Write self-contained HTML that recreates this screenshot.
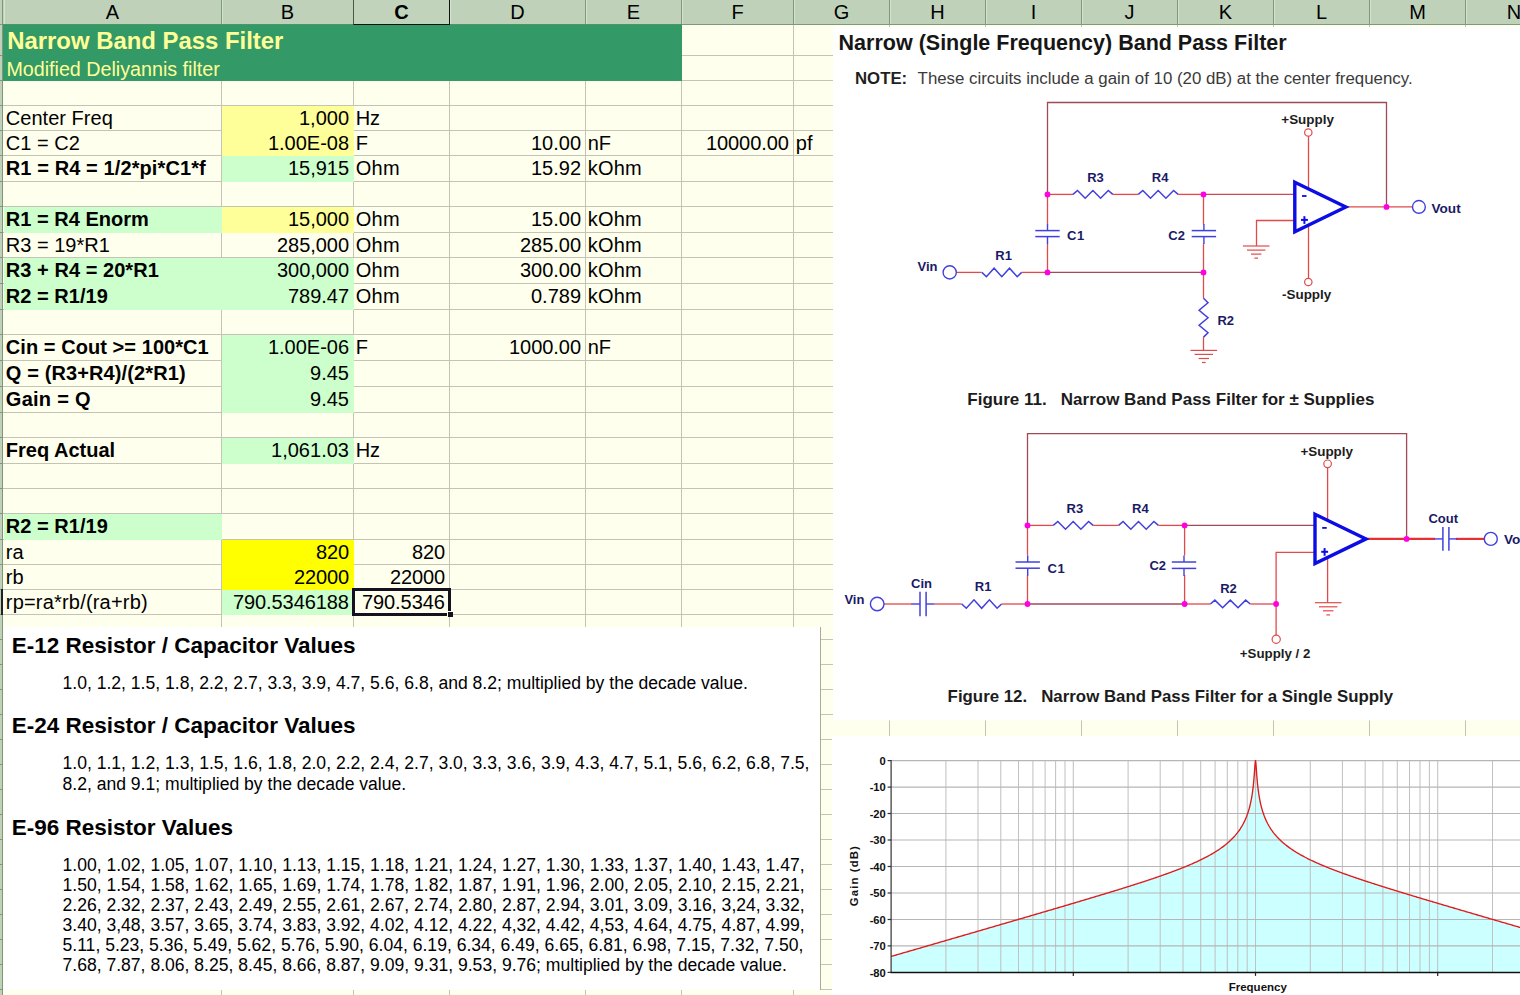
<!DOCTYPE html><html><head><meta charset="utf-8"><title>Narrow Band Pass Filter</title>
<style>
html,body{margin:0;padding:0}html{width:1520px;height:995px;overflow:hidden}
body{width:1520px;height:995px;position:relative;overflow:hidden;background:#FFFFEE;font-family:"Liberation Sans",sans-serif;color:#000}
div,span{position:absolute;box-sizing:border-box}
.t{font-size:20px;line-height:25px;white-space:pre}
.b{font-weight:bold}
.vl{width:1px;background:#C3C3B6}
.hl{height:1px;background:#C3C3B6}
.h{top:0;height:25px;font-size:20px;line-height:24px;text-align:center;background:#BFD2B9;border-right:1px solid #82977F;border-bottom:1px solid #7C9A7A;box-shadow:inset 1px 0 0 #D0E6CE}
.fy{background:#FFFF99}.fg{background:#CCFFCC}.fY{background:#FFFF00}
svg{position:absolute;left:0;top:0}
</style></head><body>
<div class="hl" style="left:3px;top:55px;width:831px"></div>
<div class="hl" style="left:3px;top:80px;width:831px"></div>
<div class="hl" style="left:3px;top:105px;width:831px"></div>
<div class="hl" style="left:3px;top:130px;width:831px"></div>
<div class="hl" style="left:3px;top:155px;width:831px"></div>
<div class="hl" style="left:3px;top:181px;width:831px"></div>
<div class="hl" style="left:3px;top:206px;width:831px"></div>
<div class="hl" style="left:3px;top:232px;width:831px"></div>
<div class="hl" style="left:3px;top:257px;width:831px"></div>
<div class="hl" style="left:3px;top:283px;width:831px"></div>
<div class="hl" style="left:3px;top:309px;width:831px"></div>
<div class="hl" style="left:3px;top:334px;width:831px"></div>
<div class="hl" style="left:3px;top:360px;width:831px"></div>
<div class="hl" style="left:3px;top:386px;width:831px"></div>
<div class="hl" style="left:3px;top:412px;width:831px"></div>
<div class="hl" style="left:3px;top:437px;width:831px"></div>
<div class="hl" style="left:3px;top:463px;width:831px"></div>
<div class="hl" style="left:3px;top:488px;width:831px"></div>
<div class="hl" style="left:3px;top:513px;width:831px"></div>
<div class="hl" style="left:3px;top:539px;width:831px"></div>
<div class="hl" style="left:3px;top:564px;width:831px"></div>
<div class="hl" style="left:3px;top:589px;width:831px"></div>
<div class="hl" style="left:3px;top:614px;width:831px"></div>
<div class="vl" style="left:221px;top:24px;height:603px"></div>
<div class="vl" style="left:353px;top:24px;height:603px"></div>
<div class="vl" style="left:449px;top:24px;height:603px"></div>
<div class="vl" style="left:585px;top:24px;height:603px"></div>
<div class="vl" style="left:681px;top:24px;height:603px"></div>
<div class="vl" style="left:793px;top:24px;height:603px"></div>
<div class="hl" style="left:820px;top:639px;width:14px"></div>
<div class="hl" style="left:820px;top:664px;width:14px"></div>
<div class="hl" style="left:820px;top:689px;width:14px"></div>
<div class="hl" style="left:820px;top:714px;width:14px"></div>
<div class="hl" style="left:820px;top:739px;width:14px"></div>
<div class="hl" style="left:820px;top:764px;width:14px"></div>
<div class="hl" style="left:820px;top:789px;width:14px"></div>
<div class="hl" style="left:820px;top:814px;width:14px"></div>
<div class="hl" style="left:820px;top:839px;width:14px"></div>
<div class="hl" style="left:820px;top:864px;width:14px"></div>
<div class="hl" style="left:820px;top:889px;width:14px"></div>
<div class="hl" style="left:820px;top:914px;width:14px"></div>
<div class="hl" style="left:820px;top:939px;width:14px"></div>
<div class="hl" style="left:820px;top:964px;width:14px"></div>
<div class="hl" style="left:820px;top:989px;width:14px"></div>
<div class="vl" style="left:221px;top:990px;height:5px"></div>
<div class="vl" style="left:353px;top:990px;height:5px"></div>
<div class="vl" style="left:449px;top:990px;height:5px"></div>
<div class="vl" style="left:585px;top:990px;height:5px"></div>
<div class="vl" style="left:681px;top:990px;height:5px"></div>
<div class="vl" style="left:793px;top:990px;height:5px"></div>
<div class="vl" style="left:889px;top:25px;height:3px"></div>
<div class="vl" style="left:985px;top:25px;height:3px"></div>
<div class="vl" style="left:1081px;top:25px;height:3px"></div>
<div class="vl" style="left:1177px;top:25px;height:3px"></div>
<div class="vl" style="left:1273px;top:25px;height:3px"></div>
<div class="vl" style="left:1369px;top:25px;height:3px"></div>
<div class="vl" style="left:1465px;top:25px;height:3px"></div>
<div class="vl" style="left:889px;top:720px;height:16px"></div>
<div class="vl" style="left:985px;top:720px;height:16px"></div>
<div class="vl" style="left:1081px;top:720px;height:16px"></div>
<div class="vl" style="left:1177px;top:720px;height:16px"></div>
<div class="vl" style="left:1273px;top:720px;height:16px"></div>
<div class="vl" style="left:1369px;top:720px;height:16px"></div>
<div class="vl" style="left:1465px;top:720px;height:16px"></div>
<div style="left:3px;top:25px;width:679px;height:56px;background:#339966"></div>
<div class="fy" style="left:222px;top:106px;width:132px;height:50px"></div>
<div class="fg" style="left:222px;top:156px;width:132px;height:26px"></div>
<div class="fg" style="left:4px;top:207px;width:218px;height:26px"></div>
<div class="fy" style="left:222px;top:207px;width:132px;height:26px"></div>
<div class="fg" style="left:4px;top:258px;width:350px;height:52px"></div>
<div class="fg" style="left:222px;top:335px;width:132px;height:78px"></div>
<div class="fg" style="left:222px;top:438px;width:132px;height:26px"></div>
<div class="fg" style="left:4px;top:514px;width:218px;height:26px"></div>
<div class="fY" style="left:222px;top:540px;width:132px;height:50px"></div>
<div class="fg" style="left:222px;top:590px;width:132px;height:25px"></div>
<span class="b" style="left:7.2px;top:26.7px;font-size:23.9px;line-height:28px;color:#FFFF99;white-space:pre">Narrow Band Pass Filter</span>
<span style="left:6.4px;top:56.5px;font-size:19.7px;line-height:24px;color:#FFFF99;white-space:pre">Modified Deliyannis filter</span>
<span class="t" style="left:5.8px;top:106.3px;letter-spacing:0.026px;">Center Freq</span>
<span class="t" style="right:1171.0px;top:106.3px;letter-spacing:-0.010px">1,000</span>
<span class="t" style="left:355.8px;top:106.3px;letter-spacing:-0.222px;">Hz</span>
<span class="t" style="left:5.8px;top:131.3px;letter-spacing:0.011px;">C1 = C2</span>
<span class="t" style="right:1171.0px;top:131.3px;letter-spacing:-0.021px">1.00E-08</span>
<span class="t" style="left:355.8px;top:131.3px;letter-spacing:-0.217px;">F</span>
<span class="t" style="right:939.0px;top:131.3px;letter-spacing:-0.010px">10.00</span>
<span class="t" style="left:587.8px;top:131.3px;letter-spacing:-0.170px;">nF</span>
<span class="t b" style="left:5.8px;top:156.3px;letter-spacing:0.101px;">R1 = R4 = 1/2*pi*C1*f</span>
<span class="t" style="right:1171.0px;top:156.3px;letter-spacing:-0.029px">15,915</span>
<span class="t" style="left:355.8px;top:156.3px;letter-spacing:0.220px;">Ohm</span>
<span class="t" style="right:939.0px;top:156.3px;letter-spacing:-0.010px">15.92</span>
<span class="t" style="left:587.8px;top:156.3px;letter-spacing:0.165px;">kOhm</span>
<span class="t b" style="left:5.8px;top:207.3px;letter-spacing:0.014px;">R1 = R4 Enorm</span>
<span class="t" style="right:1171.0px;top:207.3px;letter-spacing:-0.029px">15,000</span>
<span class="t" style="left:355.8px;top:207.3px;letter-spacing:0.220px;">Ohm</span>
<span class="t" style="right:939.0px;top:207.3px;letter-spacing:-0.010px">15.00</span>
<span class="t" style="left:587.8px;top:207.3px;letter-spacing:0.165px;">kOhm</span>
<span class="t" style="left:5.8px;top:233.3px;letter-spacing:0.004px;">R3 = 19*R1</span>
<span class="t" style="right:1171.0px;top:233.3px;letter-spacing:-0.042px">285,000</span>
<span class="t" style="left:355.8px;top:233.3px;letter-spacing:0.220px;">Ohm</span>
<span class="t" style="right:939.0px;top:233.3px;letter-spacing:-0.029px">285.00</span>
<span class="t" style="left:587.8px;top:233.3px;letter-spacing:0.165px;">kOhm</span>
<span class="t b" style="left:5.8px;top:258.3px;letter-spacing:0.046px;">R3 + R4 = 20*R1</span>
<span class="t" style="right:1171.0px;top:258.3px;letter-spacing:-0.042px">300,000</span>
<span class="t" style="left:355.8px;top:258.3px;letter-spacing:0.220px;">Ohm</span>
<span class="t" style="right:939.0px;top:258.3px;letter-spacing:-0.029px">300.00</span>
<span class="t" style="left:587.8px;top:258.3px;letter-spacing:0.165px;">kOhm</span>
<span class="t b" style="left:5.8px;top:284.3px;letter-spacing:0.027px;">R2 = R1/19</span>
<span class="t" style="right:1171.0px;top:284.3px;letter-spacing:-0.029px">789.47</span>
<span class="t" style="left:355.8px;top:284.3px;letter-spacing:0.220px;">Ohm</span>
<span class="t" style="right:939.0px;top:284.3px;letter-spacing:-0.010px">0.789</span>
<span class="t" style="left:587.8px;top:284.3px;letter-spacing:0.165px;">kOhm</span>
<span class="t b" style="left:5.8px;top:335.3px;letter-spacing:0.063px;">Cin = Cout &gt;= 100*C1</span>
<span class="t" style="right:1171.0px;top:335.3px;letter-spacing:-0.021px">1.00E-06</span>
<span class="t" style="left:355.8px;top:335.3px;letter-spacing:-0.217px;">F</span>
<span class="t" style="right:939.0px;top:335.3px;letter-spacing:-0.042px">1000.00</span>
<span class="t" style="left:587.8px;top:335.3px;letter-spacing:-0.170px;">nF</span>
<span class="t b" style="left:5.8px;top:361.3px;letter-spacing:0.120px;">Q = (R3+R4)/(2*R1)</span>
<span class="t" style="right:1171.0px;top:361.3px;letter-spacing:0.019px">9.45</span>
<span class="t b" style="left:5.8px;top:387.3px;letter-spacing:0.275px;">Gain = Q</span>
<span class="t" style="right:1171.0px;top:387.3px;letter-spacing:0.019px">9.45</span>
<span class="t b" style="left:5.8px;top:438.3px;letter-spacing:-0.002px;">Freq Actual</span>
<span class="t" style="right:1171.0px;top:438.3px;letter-spacing:0.019px">1,061.03</span>
<span class="t" style="left:355.8px;top:438.3px;letter-spacing:-0.222px;">Hz</span>
<span class="t b" style="left:5.8px;top:514.3px;letter-spacing:0.027px;">R2 = R1/19</span>
<span class="t" style="left:5.8px;top:540.3px;letter-spacing:0.108px;">ra</span>
<span class="t" style="right:1171.1px;top:540.3px;letter-spacing:-0.123px">820</span>
<span class="t" style="left:5.8px;top:565.3px;letter-spacing:0.108px;">rb</span>
<span class="t" style="right:1171.1px;top:565.3px;letter-spacing:-0.123px">22000</span>
<span class="t" style="left:5.8px;top:590.3px;letter-spacing:0.192px;">rp=ra*rb/(ra+rb)</span>
<span class="t" style="right:1171.1px;top:590.3px;letter-spacing:-0.072px">790.5346188</span>
<span class="t" style="right:731.1px;top:131.3px;letter-spacing:-0.052px">10000.00</span>
<span class="t" style="left:795.8px;top:131.3px;letter-spacing:0.160px;">pf</span>
<span class="t" style="right:1075.1px;top:540.3px;letter-spacing:-0.123px">820</span>
<span class="t" style="right:1075.1px;top:565.3px;letter-spacing:-0.123px">22000</span>
<span class="t" style="right:1075.1px;top:590.3px;letter-spacing:-0.052px">790.5346</span>
<div style="left:352px;top:588px;width:99px;height:28px;border:3px solid #15121F"></div>
<div style="left:447px;top:611px;width:6px;height:6px;background:#15121F;border:1px solid #FFFFEE;border-right:0;border-bottom:0"></div>
<div style="left:4px;top:627px;width:817px;height:363px;background:#fff;border-right:1px solid #ABAB98"></div>
<span style="left:11.7px;top:632.30px;font-size:22.50px;line-height:27px;white-space:pre;color:#000;font-weight:bold;">E-12 Resistor / Capacitor Values</span>
<span style="left:62.5px;top:671.51px;font-size:17.57px;line-height:22px;white-space:pre;color:#000;">1.0, 1.2, 1.5, 1.8, 2.2, 2.7, 3.3, 3.9, 4.7, 5.6, 6.8, and 8.2; multiplied by the decade value.</span>
<span style="left:11.7px;top:712.30px;font-size:22.50px;line-height:27px;white-space:pre;color:#000;font-weight:bold;">E-24 Resistor / Capacitor Values</span>
<span style="left:62.5px;top:752.41px;font-size:17.57px;line-height:22px;white-space:pre;color:#000;">1.0, 1.1, 1.2, 1.3, 1.5, 1.6, 1.8, 2.0, 2.2, 2.4, 2.7, 3.0, 3.3, 3.6, 3.9, 4.3, 4.7, 5.1, 5.6, 6.2, 6.8, 7.5,</span>
<span style="left:62.5px;top:772.51px;font-size:17.57px;line-height:22px;white-space:pre;color:#000;">8.2, and 9.1; multiplied by the decade value.</span>
<span style="left:11.7px;top:813.60px;font-size:22.50px;line-height:27px;white-space:pre;color:#000;font-weight:bold;">E-96 Resistor Values</span>
<span style="left:62.5px;top:853.71px;font-size:17.57px;line-height:22px;white-space:pre;color:#000;">1.00, 1.02, 1.05, 1.07, 1.10, 1.13, 1.15, 1.18, 1.21, 1.24, 1.27, 1.30, 1.33, 1.37, 1.40, 1.43, 1.47,</span>
<span style="left:62.5px;top:873.83px;font-size:17.57px;line-height:22px;white-space:pre;color:#000;">1.50, 1.54, 1.58, 1.62, 1.65, 1.69, 1.74, 1.78, 1.82, 1.87, 1.91, 1.96, 2.00, 2.05, 2.10, 2.15, 2.21,</span>
<span style="left:62.5px;top:893.95px;font-size:17.57px;line-height:22px;white-space:pre;color:#000;">2.26, 2.32, 2.37, 2.43, 2.49, 2.55, 2.61, 2.67, 2.74, 2.80, 2.87, 2.94, 3.01, 3.09, 3.16, 3,24, 3.32,</span>
<span style="left:62.5px;top:914.07px;font-size:17.57px;line-height:22px;white-space:pre;color:#000;">3.40, 3,48, 3.57, 3.65, 3.74, 3.83, 3.92, 4.02, 4.12, 4.22, 4,32, 4.42, 4,53, 4.64, 4.75, 4.87, 4.99,</span>
<span style="left:62.5px;top:934.19px;font-size:17.57px;line-height:22px;white-space:pre;color:#000;">5.11, 5.23, 5.36, 5.49, 5.62, 5.76, 5.90, 6.04, 6.19, 6.34, 6.49, 6.65, 6.81, 6.98, 7.15, 7.32, 7.50,</span>
<span style="left:62.5px;top:954.31px;font-size:17.57px;line-height:22px;white-space:pre;color:#000;">7.68, 7.87, 8.06, 8.25, 8.45, 8.66, 8.87, 9.09, 9.31, 9.53, 9.76; multiplied by the decade value.</span>
<svg width="1520" height="995" viewBox="0 0 1520 995" font-family="Liberation Sans, sans-serif">
<rect x="833" y="27" width="687" height="693.5" fill="#fff"/>
<text x="838.6" y="49.9" font-size="21.50" font-weight="bold" fill="#161616" text-anchor="start" >Narrow (Single Frequency) Band Pass Filter</text>
<text x="855.0" y="84.2" font-size="16.80" font-weight="bold" fill="#1f1f1f" text-anchor="start" >NOTE:</text>
<text x="917.6" y="84.2" font-size="16.85" font-weight="normal" fill="#3a3a3a" text-anchor="start" >These circuits include a gain of 10 (20 dB) at the center frequency.</text>
<path d="M1047.5,194.4 L1047.5,102.5 L1386.5,102.5 L1386.5,206.9" stroke="#A04A58" stroke-width="1.3" fill="none"/>
<path d="M1047.5,194.4 L1073.0,194.4" stroke="#E04A4A" stroke-width="1.3" fill="none"/>
<path d="M1073.0,194.4 L1077.5,190.5 L1085.2,198.2 L1092.9,190.5 L1100.6,198.2 L1108.3,190.5 L1112.8,194.4" stroke="#4240DC" stroke-width="1.5" fill="none"/>
<path d="M1112.8,194.4 L1138.3,194.4" stroke="#E04A4A" stroke-width="1.3" fill="none"/>
<path d="M1138.3,194.4 L1142.8,190.5 L1150.5,198.2 L1158.2,190.5 L1165.9,198.2 L1173.6,190.5 L1178.1,194.4" stroke="#4240DC" stroke-width="1.5" fill="none"/>
<path d="M1178.1,194.4 L1203.5,194.4" stroke="#E04A4A" stroke-width="1.3" fill="none"/>
<path d="M1203.5,194.4 L1295.0,194.4" stroke="#C84A52" stroke-width="1.3" fill="none"/>
<path d="M1047.5,194.4 L1047.5,224.5" stroke="#E04A4A" stroke-width="1.3" fill="none"/>
<path d="M1047.5,243.5 L1047.5,272.4" stroke="#E04A4A" stroke-width="1.3" fill="none"/>
<path d="M1203.5,194.4 L1203.5,224.5" stroke="#E04A4A" stroke-width="1.3" fill="none"/>
<path d="M1203.5,243.5 L1203.5,272.4" stroke="#E04A4A" stroke-width="1.3" fill="none"/>
<path d="M1047.5,224.1 L1047.5,230.6" stroke="#4240DC" stroke-width="1.4" fill="none"/>
<path d="M1047.5,236.6 L1047.5,244.1" stroke="#4240DC" stroke-width="1.4" fill="none"/>
<path d="M1035.3,230.6 L1059.7,230.6" stroke="#4240DC" stroke-width="1.5" fill="none"/>
<path d="M1035.3,236.6 L1059.7,236.6" stroke="#4240DC" stroke-width="1.5" fill="none"/>
<path d="M1203.9,224.1 L1203.9,230.6" stroke="#4240DC" stroke-width="1.4" fill="none"/>
<path d="M1203.9,236.6 L1203.9,244.1" stroke="#4240DC" stroke-width="1.4" fill="none"/>
<path d="M1191.7,230.6 L1216.1,230.6" stroke="#4240DC" stroke-width="1.5" fill="none"/>
<path d="M1191.7,236.6 L1216.1,236.6" stroke="#4240DC" stroke-width="1.5" fill="none"/>
<path d="M1047.5,272.4 L1203.5,272.4" stroke="#A04A58" stroke-width="1.3" fill="none"/>
<path d="M956.0,272.4 L981.7,272.4" stroke="#E04A4A" stroke-width="1.3" fill="none"/>
<path d="M981.9,272.4 L986.4,276.7 L994.1,268.2 L1001.8,276.7 L1009.5,268.2 L1017.2,276.7 L1021.7,272.4" stroke="#4240DC" stroke-width="1.5" fill="none"/>
<path d="M1021.7,272.4 L1047.5,272.4" stroke="#E04A4A" stroke-width="1.3" fill="none"/>
<circle cx="949.7" cy="272.4" r="6.6" fill="#fff" stroke="#4240DC" stroke-width="1.4"/>
<path d="M1203.5,272.4 L1203.5,298.3" stroke="#E04A4A" stroke-width="1.3" fill="none"/>
<path d="M1203.5,298.3 L1208.0,302.7 L1199.1,310.2 L1208.0,317.7 L1199.1,325.2 L1208.0,332.7 L1203.5,337.1" stroke="#4240DC" stroke-width="1.5" fill="none"/>
<path d="M1203.5,337.1 L1203.5,350.4" stroke="#E04A4A" stroke-width="1.3" fill="none"/>
<path d="M1190.5,350.4 L1217.1,350.4" stroke="#E04A4A" stroke-width="1.2" fill="none"/>
<path d="M1194.6,354.4 L1213.0,354.4" stroke="#E04A4A" stroke-width="1.2" fill="none"/>
<path d="M1198.6,358.5 L1209.0,358.5" stroke="#E04A4A" stroke-width="1.2" fill="none"/>
<path d="M1202.0,362.5 L1205.6,362.5" stroke="#E04A4A" stroke-width="1.2" fill="none"/>
<path d="M1295.0,220.5 L1256.5,220.5 L1256.5,246.0" stroke="#E04A4A" stroke-width="1.3" fill="none"/>
<path d="M1242.9,246.0 L1269.5,246.0" stroke="#E04A4A" stroke-width="1.2" fill="none"/>
<path d="M1247.0,250.1 L1265.4,250.1" stroke="#E04A4A" stroke-width="1.2" fill="none"/>
<path d="M1251.0,254.1 L1261.4,254.1" stroke="#E04A4A" stroke-width="1.2" fill="none"/>
<path d="M1254.4,258.1 L1258.0,258.1" stroke="#E04A4A" stroke-width="1.2" fill="none"/>
<path d="M1308.5,136.0 L1308.5,190.0" stroke="#E04A4A" stroke-width="1.3" fill="none"/>
<path d="M1308.5,224.0 L1308.5,278.5" stroke="#E04A4A" stroke-width="1.3" fill="none"/>
<circle cx="1308.3" cy="132.5" r="3.7" fill="#fff" stroke="#E04A4A" stroke-width="1.2"/>
<circle cx="1308.3" cy="282.0" r="3.7" fill="#fff" stroke="#E04A4A" stroke-width="1.2"/>
<path d="M1346.0,206.9 L1412.5,206.9" stroke="#E04A4A" stroke-width="1.3" fill="none"/>
<path d="M1294.8,182.3 L1345.8,207.0 L1294.8,231.7 Z" stroke="#0C0CE4" stroke-width="3.4" fill="#fff" stroke-linejoin="miter"/>
<path d="M1302.0,196.0 L1306.5,196.0" stroke="#0C0CE4" stroke-width="1.8" fill="none"/>
<path d="M1301.0,219.9 L1307.9,219.9" stroke="#0C0CE4" stroke-width="2.0" fill="none"/>
<path d="M1304.4,216.2 L1304.4,223.9" stroke="#0C0CE4" stroke-width="2.0" fill="none"/>
<circle cx="1418.9" cy="206.9" r="6.4" fill="#fff" stroke="#4240DC" stroke-width="1.4"/>
<circle cx="1047.5" cy="194.4" r="2.9" fill="#FF00E0"/>
<circle cx="1203.5" cy="194.4" r="2.9" fill="#FF00E0"/>
<circle cx="1047.5" cy="272.4" r="2.9" fill="#FF00E0"/>
<circle cx="1203.5" cy="272.4" r="2.9" fill="#FF00E0"/>
<circle cx="1386.5" cy="206.9" r="2.9" fill="#FF00E0"/>
<text x="1087.2" y="181.6" font-size="13.00" font-weight="bold" fill="#1A1A66" text-anchor="start" >R3</text>
<text x="1151.8" y="181.6" font-size="13.00" font-weight="bold" fill="#1A1A66" text-anchor="start" >R4</text>
<text x="995.3" y="260.0" font-size="13.00" font-weight="bold" fill="#1A1A66" text-anchor="start" >R1</text>
<text x="1067.0" y="239.6" font-size="13.00" font-weight="bold" fill="#1A1A66" text-anchor="start" letter-spacing="0.6">C1</text>
<text x="1168.3" y="239.6" font-size="13.00" font-weight="bold" fill="#1A1A66" text-anchor="start" >C2</text>
<text x="1217.4" y="324.8" font-size="13.00" font-weight="bold" fill="#1A1A66" text-anchor="start" >R2</text>
<text x="917.5" y="271.4" font-size="13.00" font-weight="bold" fill="#1A1A66" text-anchor="start" >Vin</text>
<text x="1431.5" y="212.7" font-size="13.60" font-weight="bold" fill="#1A1A66" text-anchor="start" >Vout</text>
<text x="1281.3" y="123.7" font-size="13.45" font-weight="bold" fill="#1c1c1c" text-anchor="start" >+Supply</text>
<text x="1282.0" y="298.8" font-size="13.45" font-weight="bold" fill="#1c1c1c" text-anchor="start" >-Supply</text>
<text x="967.3" y="404.8" font-size="17.00" font-weight="bold" fill="#1c1c1c" text-anchor="start" xml:space="preserve">Figure 11.   Narrow Band Pass Filter for ± Supplies</text>
<path d="M1027.5,525.4 L1027.5,433.6 L1406.6,433.6 L1406.6,538.9" stroke="#A04A58" stroke-width="1.3" fill="none"/>
<path d="M1027.5,525.4 L1053.3,525.4" stroke="#E04A4A" stroke-width="1.3" fill="none"/>
<path d="M1053.3,525.4 L1057.8,521.5 L1065.5,529.2 L1073.2,521.5 L1080.9,529.2 L1088.6,521.5 L1093.1,525.4" stroke="#4240DC" stroke-width="1.5" fill="none"/>
<path d="M1093.1,525.4 L1118.6,525.4" stroke="#E04A4A" stroke-width="1.3" fill="none"/>
<path d="M1118.6,525.4 L1123.1,521.5 L1130.8,529.2 L1138.5,521.5 L1146.2,529.2 L1153.9,521.5 L1158.4,525.4" stroke="#4240DC" stroke-width="1.5" fill="none"/>
<path d="M1158.4,525.4 L1184.6,525.4" stroke="#E04A4A" stroke-width="1.3" fill="none"/>
<path d="M1184.6,525.4 L1315.0,525.4" stroke="#A04A58" stroke-width="1.3" fill="none"/>
<path d="M1027.5,525.4 L1027.5,555.5" stroke="#E04A4A" stroke-width="1.3" fill="none"/>
<path d="M1027.5,575.0 L1027.5,604.0" stroke="#E04A4A" stroke-width="1.3" fill="none"/>
<path d="M1184.6,525.4 L1184.6,555.5" stroke="#E04A4A" stroke-width="1.3" fill="none"/>
<path d="M1184.6,575.0 L1184.6,604.0" stroke="#E04A4A" stroke-width="1.3" fill="none"/>
<path d="M1027.7,555.5 L1027.7,562.0" stroke="#4240DC" stroke-width="1.4" fill="none"/>
<path d="M1027.7,568.2 L1027.7,575.7" stroke="#4240DC" stroke-width="1.4" fill="none"/>
<path d="M1015.5,562.0 L1039.9,562.0" stroke="#4240DC" stroke-width="1.5" fill="none"/>
<path d="M1015.5,568.2 L1039.9,568.2" stroke="#4240DC" stroke-width="1.5" fill="none"/>
<path d="M1184.0,555.5 L1184.0,562.0" stroke="#4240DC" stroke-width="1.4" fill="none"/>
<path d="M1184.0,568.4 L1184.0,575.9" stroke="#4240DC" stroke-width="1.4" fill="none"/>
<path d="M1171.8,562.0 L1196.2,562.0" stroke="#4240DC" stroke-width="1.5" fill="none"/>
<path d="M1171.8,568.4 L1196.2,568.4" stroke="#4240DC" stroke-width="1.5" fill="none"/>
<path d="M1027.5,604.0 L1184.6,604.0" stroke="#A04A58" stroke-width="1.3" fill="none"/>
<path d="M883.8,604.0 L912.0,604.0" stroke="#E04A4A" stroke-width="1.3" fill="none"/>
<path d="M911.5,604.0 L920.0,604.0" stroke="#4240DC" stroke-width="1.4" fill="none"/>
<path d="M926.1,604.0 L934.6,604.0" stroke="#4240DC" stroke-width="1.4" fill="none"/>
<path d="M920.0,591.8 L920.0,616.2" stroke="#4240DC" stroke-width="1.5" fill="none"/>
<path d="M926.1,591.8 L926.1,616.2" stroke="#4240DC" stroke-width="1.5" fill="none"/>
<path d="M934.5,604.0 L961.8,604.0" stroke="#E04A4A" stroke-width="1.3" fill="none"/>
<path d="M961.8,604.0 L966.3,608.3 L974.0,599.8 L981.7,608.3 L989.4,599.8 L997.1,608.3 L1001.6,604.0" stroke="#4240DC" stroke-width="1.5" fill="none"/>
<path d="M1001.6,604.0 L1027.5,604.0" stroke="#E04A4A" stroke-width="1.3" fill="none"/>
<circle cx="877.2" cy="604.0" r="6.8" fill="#fff" stroke="#4240DC" stroke-width="1.4"/>
<path d="M1184.6,604.0 L1210.4,604.0" stroke="#E04A4A" stroke-width="1.3" fill="none"/>
<path d="M1210.4,604.0 L1214.9,600.1 L1222.6,607.8 L1230.3,600.1 L1238.0,607.8 L1245.7,600.1 L1250.2,604.0" stroke="#4240DC" stroke-width="1.5" fill="none"/>
<path d="M1250.2,604.0 L1276.1,604.0" stroke="#E04A4A" stroke-width="1.3" fill="none"/>
<path d="M1315.0,552.4 L1276.1,552.4 L1276.1,635.0" stroke="#E04A4A" stroke-width="1.3" fill="none"/>
<circle cx="1276.2" cy="639.2" r="4.1" fill="#fff" stroke="#E04A4A" stroke-width="1.2"/>
<path d="M1327.6,467.5 L1327.6,522.0" stroke="#E04A4A" stroke-width="1.3" fill="none"/>
<path d="M1327.6,556.0 L1327.6,602.6" stroke="#E04A4A" stroke-width="1.3" fill="none"/>
<circle cx="1327.6" cy="463.8" r="3.8" fill="#fff" stroke="#E04A4A" stroke-width="1.2"/>
<path d="M1314.9,602.7 L1341.5,602.7" stroke="#E04A4A" stroke-width="1.2" fill="none"/>
<path d="M1319.0,606.8 L1337.4,606.8" stroke="#E04A4A" stroke-width="1.2" fill="none"/>
<path d="M1323.0,610.8 L1333.4,610.8" stroke="#E04A4A" stroke-width="1.2" fill="none"/>
<path d="M1326.4,614.9 L1330.0,614.9" stroke="#E04A4A" stroke-width="1.2" fill="none"/>
<path d="M1366.0,538.9 L1435.0,538.9" stroke="#E83030" stroke-width="2.4" fill="none"/>
<path d="M1456.0,538.9 L1484.5,538.9" stroke="#E83030" stroke-width="2.2" fill="none"/>
<path d="M1434.4,538.9 L1442.9,538.9" stroke="#4240DC" stroke-width="1.4" fill="none"/>
<path d="M1448.9,538.9 L1457.4,538.9" stroke="#4240DC" stroke-width="1.4" fill="none"/>
<path d="M1442.9,527.1 L1442.9,550.7" stroke="#4240DC" stroke-width="1.5" fill="none"/>
<path d="M1448.9,527.1 L1448.9,550.7" stroke="#4240DC" stroke-width="1.5" fill="none"/>
<path d="M1315.0,514.2 L1366.0,538.9 L1315.0,563.6 Z" stroke="#0C0CE4" stroke-width="3.4" fill="#fff" stroke-linejoin="miter"/>
<path d="M1322.2,527.9 L1326.7,527.9" stroke="#0C0CE4" stroke-width="1.8" fill="none"/>
<path d="M1321.2,551.8 L1328.1,551.8" stroke="#0C0CE4" stroke-width="2.0" fill="none"/>
<path d="M1324.6,548.1 L1324.6,555.8" stroke="#0C0CE4" stroke-width="2.0" fill="none"/>
<circle cx="1490.8" cy="538.9" r="6.5" fill="#fff" stroke="#4240DC" stroke-width="1.4"/>
<circle cx="1027.5" cy="525.4" r="2.9" fill="#FF00E0"/>
<circle cx="1184.6" cy="525.4" r="2.9" fill="#FF00E0"/>
<circle cx="1027.5" cy="604.0" r="2.9" fill="#FF00E0"/>
<circle cx="1184.6" cy="604.0" r="2.9" fill="#FF00E0"/>
<circle cx="1276.1" cy="604.0" r="2.9" fill="#FF00E0"/>
<circle cx="1406.6" cy="538.9" r="2.9" fill="#FF00E0"/>
<text x="1066.5" y="512.5" font-size="13.00" font-weight="bold" fill="#1A1A66" text-anchor="start" >R3</text>
<text x="1132.0" y="512.5" font-size="13.00" font-weight="bold" fill="#1A1A66" text-anchor="start" >R4</text>
<text x="974.8" y="591.2" font-size="13.00" font-weight="bold" fill="#1A1A66" text-anchor="start" >R1</text>
<text x="1047.5" y="572.6" font-size="13.00" font-weight="bold" fill="#1A1A66" text-anchor="start" letter-spacing="0.6">C1</text>
<text x="1149.4" y="569.9" font-size="13.00" font-weight="bold" fill="#1A1A66" text-anchor="start" >C2</text>
<text x="1220.2" y="592.9" font-size="13.00" font-weight="bold" fill="#1A1A66" text-anchor="start" >R2</text>
<text x="844.4" y="603.6" font-size="13.00" font-weight="bold" fill="#1A1A66" text-anchor="start" >Vin</text>
<text x="911.0" y="587.8" font-size="13.00" font-weight="bold" fill="#1A1A66" text-anchor="start" >Cin</text>
<text x="1428.4" y="522.9" font-size="13.00" font-weight="bold" fill="#1A1A66" text-anchor="start" >Cout</text>
<text x="1504.0" y="544.0" font-size="13.60" font-weight="bold" fill="#1A1A66" text-anchor="start" >Vout</text>
<text x="1300.4" y="456.0" font-size="13.45" font-weight="bold" fill="#1c1c1c" text-anchor="start" >+Supply</text>
<text x="1239.8" y="657.9" font-size="13.30" font-weight="bold" fill="#1c1c1c" text-anchor="start" >+Supply / 2</text>
<text x="947.6" y="702.2" font-size="16.85" font-weight="bold" fill="#1c1c1c" text-anchor="start" xml:space="preserve">Figure 12.   Narrow Band Pass Filter for a Single Supply</text>
</svg>
<svg width="1520" height="995" viewBox="0 0 1520 995" font-family="Liberation Sans, sans-serif">
<rect x="832" y="736" width="688" height="259" fill="#fff"/>
<path d="M891.10,956.46 L892.10,956.17 L893.10,955.88 L894.10,955.59 L895.10,955.30 L896.10,955.00 L897.10,954.71 L898.10,954.42 L899.10,954.13 L900.10,953.84 L901.10,953.55 L902.10,953.26 L903.10,952.97 L904.10,952.68 L905.10,952.39 L906.10,952.10 L907.10,951.81 L908.10,951.52 L909.10,951.23 L910.10,950.94 L911.10,950.64 L912.10,950.35 L913.10,950.06 L914.10,949.77 L915.10,949.48 L916.10,949.19 L917.10,948.90 L918.10,948.61 L919.10,948.32 L920.10,948.03 L921.10,947.74 L922.10,947.45 L923.10,947.16 L924.10,946.86 L925.10,946.57 L926.10,946.28 L927.10,945.99 L928.10,945.70 L929.10,945.41 L930.10,945.12 L931.10,944.83 L932.10,944.54 L933.10,944.25 L934.10,943.96 L935.10,943.67 L936.10,943.38 L937.10,943.08 L938.10,942.79 L939.10,942.50 L940.10,942.21 L941.10,941.92 L942.10,941.63 L943.10,941.34 L944.10,941.05 L945.10,940.76 L946.10,940.47 L947.10,940.18 L948.10,939.89 L949.10,939.59 L950.10,939.30 L951.10,939.01 L952.10,938.72 L953.10,938.43 L954.10,938.14 L955.10,937.85 L956.10,937.56 L957.10,937.27 L958.10,936.98 L959.10,936.69 L960.10,936.39 L961.10,936.10 L962.10,935.81 L963.10,935.52 L964.10,935.23 L965.10,934.94 L966.10,934.65 L967.10,934.36 L968.10,934.07 L969.10,933.78 L970.10,933.48 L971.10,933.19 L972.10,932.90 L973.10,932.61 L974.10,932.32 L975.10,932.03 L976.10,931.74 L977.10,931.45 L978.10,931.16 L979.10,930.87 L980.10,930.57 L981.10,930.28 L982.10,929.99 L983.10,929.70 L984.10,929.41 L985.10,929.12 L986.10,928.83 L987.10,928.54 L988.10,928.24 L989.10,927.95 L990.10,927.66 L991.10,927.37 L992.10,927.08 L993.10,926.79 L994.10,926.50 L995.10,926.20 L996.10,925.91 L997.10,925.62 L998.10,925.33 L999.10,925.04 L1000.10,924.75 L1001.10,924.46 L1002.10,924.16 L1003.10,923.87 L1004.10,923.58 L1005.10,923.29 L1006.10,923.00 L1007.10,922.71 L1008.10,922.41 L1009.10,922.12 L1010.10,921.83 L1011.10,921.54 L1012.10,921.25 L1013.10,920.96 L1014.10,920.66 L1015.10,920.37 L1016.10,920.08 L1017.10,919.79 L1018.10,919.50 L1019.10,919.20 L1020.10,918.91 L1021.10,918.62 L1022.10,918.33 L1023.10,918.03 L1024.10,917.74 L1025.10,917.45 L1026.10,917.16 L1027.10,916.87 L1028.10,916.57 L1029.10,916.28 L1030.10,915.99 L1031.10,915.70 L1032.10,915.40 L1033.10,915.11 L1034.10,914.82 L1035.10,914.52 L1036.10,914.23 L1037.10,913.94 L1038.10,913.65 L1039.10,913.35 L1040.10,913.06 L1041.10,912.77 L1042.10,912.47 L1043.10,912.18 L1044.10,911.89 L1045.10,911.59 L1046.10,911.30 L1047.10,911.01 L1048.10,910.71 L1049.10,910.42 L1050.10,910.12 L1051.10,909.83 L1052.10,909.54 L1053.10,909.24 L1054.10,908.95 L1055.10,908.65 L1056.10,908.36 L1057.10,908.07 L1058.10,907.77 L1059.10,907.48 L1060.10,907.18 L1061.10,906.89 L1062.10,906.59 L1063.10,906.30 L1064.10,906.00 L1065.10,905.71 L1066.10,905.41 L1067.10,905.11 L1068.10,904.82 L1069.10,904.52 L1070.10,904.23 L1071.10,903.93 L1072.10,903.64 L1073.10,903.34 L1074.10,903.04 L1075.10,902.75 L1076.10,902.45 L1077.10,902.15 L1078.10,901.85 L1079.10,901.56 L1080.10,901.26 L1081.10,900.96 L1082.10,900.66 L1083.10,900.37 L1084.10,900.07 L1085.10,899.77 L1086.10,899.47 L1087.10,899.17 L1088.10,898.87 L1089.10,898.57 L1090.10,898.27 L1091.10,897.97 L1092.10,897.67 L1093.10,897.37 L1094.10,897.07 L1095.10,896.77 L1096.10,896.47 L1097.10,896.17 L1098.10,895.87 L1099.10,895.57 L1100.10,895.26 L1101.10,894.96 L1102.10,894.66 L1103.10,894.36 L1104.10,894.05 L1105.10,893.75 L1106.10,893.45 L1107.10,893.14 L1108.10,892.84 L1109.10,892.53 L1110.10,892.23 L1111.10,891.92 L1112.10,891.61 L1113.10,891.31 L1114.10,891.00 L1115.10,890.69 L1116.10,890.38 L1117.10,890.08 L1118.10,889.77 L1119.10,889.46 L1120.10,889.15 L1121.10,888.84 L1122.10,888.53 L1123.10,888.21 L1124.10,887.90 L1125.10,887.59 L1126.10,887.28 L1127.10,886.96 L1128.10,886.65 L1129.10,886.33 L1130.10,886.02 L1131.10,885.70 L1132.10,885.38 L1133.10,885.07 L1134.10,884.75 L1135.10,884.43 L1136.10,884.11 L1137.10,883.79 L1138.10,883.46 L1139.10,883.14 L1140.10,882.82 L1141.10,882.49 L1142.10,882.17 L1143.10,881.84 L1144.10,881.52 L1145.10,881.19 L1146.10,880.86 L1147.10,880.53 L1148.10,880.20 L1149.10,879.86 L1150.10,879.53 L1151.10,879.20 L1152.10,878.86 L1153.10,878.52 L1154.10,878.18 L1155.10,877.84 L1156.10,877.50 L1157.10,877.16 L1158.10,876.82 L1159.10,876.47 L1160.10,876.12 L1161.10,875.78 L1162.10,875.43 L1163.10,875.07 L1164.10,874.72 L1165.10,874.36 L1166.10,874.01 L1167.10,873.65 L1168.10,873.29 L1169.10,872.92 L1170.10,872.56 L1171.10,872.19 L1172.10,871.82 L1173.10,871.45 L1174.10,871.07 L1175.10,870.70 L1176.10,870.32 L1177.10,869.93 L1178.10,869.55 L1179.10,869.16 L1180.10,868.77 L1181.10,868.38 L1182.10,867.98 L1183.10,867.58 L1184.10,867.18 L1185.10,866.77 L1186.10,866.36 L1187.10,865.95 L1188.10,865.53 L1189.10,865.11 L1190.10,864.68 L1191.10,864.25 L1192.10,863.82 L1193.10,863.38 L1194.10,862.93 L1195.10,862.48 L1196.10,862.03 L1197.10,861.57 L1198.10,861.10 L1199.10,860.63 L1200.10,860.15 L1201.10,859.67 L1202.10,859.18 L1203.10,858.68 L1204.10,858.18 L1205.10,857.66 L1206.10,857.14 L1207.10,856.62 L1208.10,856.08 L1209.10,855.53 L1210.10,854.98 L1211.10,854.41 L1212.10,853.83 L1213.10,853.25 L1214.10,852.65 L1215.10,852.04 L1216.10,851.41 L1217.10,850.77 L1218.10,850.12 L1219.10,849.45 L1220.10,848.77 L1221.10,848.07 L1222.10,847.35 L1223.10,846.61 L1224.10,845.85 L1225.10,845.07 L1226.10,844.27 L1227.10,843.44 L1228.10,842.58 L1229.10,841.69 L1230.10,840.77 L1231.10,839.82 L1232.10,838.83 L1233.10,837.80 L1234.10,836.72 L1235.10,835.60 L1236.10,834.42 L1237.10,833.18 L1238.10,831.88 L1239.10,830.50 L1240.10,829.04 L1241.10,827.48 L1242.10,825.81 L1243.10,824.02 L1244.10,822.08 L1244.35,821.57 L1244.60,821.05 L1244.85,820.51 L1245.10,819.97 L1245.35,819.41 L1245.60,818.83 L1245.85,818.25 L1246.10,817.65 L1246.35,817.03 L1246.60,816.39 L1246.85,815.74 L1247.10,815.07 L1247.35,814.38 L1247.60,813.67 L1247.85,812.93 L1248.10,812.17 L1248.35,811.39 L1248.60,810.58 L1248.85,809.74 L1249.10,808.87 L1249.35,807.97 L1249.60,807.03 L1249.85,806.05 L1250.10,805.03 L1250.35,803.96 L1250.60,802.84 L1250.85,801.67 L1251.10,800.43 L1251.35,799.13 L1251.60,797.75 L1251.85,796.29 L1252.10,794.74 L1252.35,793.08 L1252.60,791.30 L1252.85,789.38 L1253.10,787.31 L1253.35,785.05 L1253.60,782.58 L1253.85,779.88 L1254.10,776.91 L1254.35,773.65 L1254.60,770.15 L1254.85,766.53 L1255.10,763.22 L1255.35,761.01 L1255.50,760.60 L1255.60,760.78 L1255.85,762.65 L1256.10,765.82 L1256.35,769.42 L1256.60,772.97 L1256.85,776.28 L1257.10,779.31 L1257.35,782.06 L1257.60,784.57 L1257.85,786.87 L1258.10,788.98 L1258.35,790.93 L1258.60,792.73 L1258.85,794.42 L1259.10,795.99 L1259.35,797.47 L1259.60,798.86 L1259.85,800.18 L1260.10,801.42 L1260.35,802.61 L1260.60,803.74 L1260.85,804.82 L1261.10,805.85 L1261.35,806.83 L1261.60,807.78 L1261.85,808.69 L1262.10,809.57 L1262.35,810.41 L1262.60,811.23 L1262.85,812.02 L1263.10,812.78 L1263.35,813.52 L1263.60,814.24 L1263.85,814.93 L1264.10,815.61 L1264.35,816.26 L1264.60,816.90 L1264.85,817.52 L1265.10,818.13 L1265.35,818.72 L1265.60,819.29 L1265.85,819.86 L1266.10,820.41 L1266.35,820.94 L1266.60,821.47 L1266.85,821.98 L1267.10,822.48 L1267.35,822.97 L1267.60,823.46 L1268.60,825.29 L1269.60,826.99 L1270.60,828.58 L1271.60,830.07 L1272.60,831.47 L1273.60,832.80 L1274.60,834.06 L1275.60,835.25 L1276.60,836.39 L1277.60,837.48 L1278.60,838.53 L1279.60,839.53 L1280.60,840.49 L1281.60,841.42 L1282.60,842.32 L1283.60,843.18 L1284.60,844.02 L1285.60,844.83 L1286.60,845.62 L1287.60,846.39 L1288.60,847.13 L1289.60,847.86 L1290.60,848.56 L1291.60,849.25 L1292.60,849.92 L1293.60,850.58 L1294.60,851.22 L1295.60,851.85 L1296.60,852.46 L1297.60,853.07 L1298.60,853.66 L1299.60,854.24 L1300.60,854.81 L1301.60,855.37 L1302.60,855.91 L1303.60,856.45 L1304.60,856.99 L1305.60,857.51 L1306.60,858.02 L1307.60,858.53 L1308.60,859.03 L1309.60,859.52 L1310.60,860.01 L1311.60,860.49 L1312.60,860.96 L1313.60,861.43 L1314.60,861.89 L1315.60,862.35 L1316.60,862.80 L1317.60,863.24 L1318.60,863.68 L1319.60,864.12 L1320.60,864.55 L1321.60,864.98 L1322.60,865.40 L1323.60,865.82 L1324.60,866.24 L1325.60,866.65 L1326.60,867.06 L1327.60,867.46 L1328.60,867.86 L1329.60,868.26 L1330.60,868.65 L1331.60,869.05 L1332.60,869.43 L1333.60,869.82 L1334.60,870.20 L1335.60,870.58 L1336.60,870.96 L1337.60,871.34 L1338.60,871.71 L1339.60,872.08 L1340.60,872.45 L1341.60,872.81 L1342.60,873.18 L1343.60,873.54 L1344.60,873.90 L1345.60,874.26 L1346.60,874.61 L1347.60,874.97 L1348.60,875.32 L1349.60,875.67 L1350.60,876.02 L1351.60,876.37 L1352.60,876.71 L1353.60,877.06 L1354.60,877.40 L1355.60,877.74 L1356.60,878.08 L1357.60,878.42 L1358.60,878.76 L1359.60,879.10 L1360.60,879.43 L1361.60,879.76 L1362.60,880.10 L1363.60,880.43 L1364.60,880.76 L1365.60,881.09 L1366.60,881.42 L1367.60,881.74 L1368.60,882.07 L1369.60,882.40 L1370.60,882.72 L1371.60,883.04 L1372.60,883.37 L1373.60,883.69 L1374.60,884.01 L1375.60,884.33 L1376.60,884.65 L1377.60,884.97 L1378.60,885.29 L1379.60,885.60 L1380.60,885.92 L1381.60,886.24 L1382.60,886.55 L1383.60,886.87 L1384.60,887.18 L1385.60,887.50 L1386.60,887.81 L1387.60,888.12 L1388.60,888.43 L1389.60,888.74 L1390.60,889.05 L1391.60,889.36 L1392.60,889.67 L1393.60,889.98 L1394.60,890.29 L1395.60,890.60 L1396.60,890.91 L1397.60,891.21 L1398.60,891.52 L1399.60,891.83 L1400.60,892.13 L1401.60,892.44 L1402.60,892.74 L1403.60,893.05 L1404.60,893.35 L1405.60,893.66 L1406.60,893.96 L1407.60,894.27 L1408.60,894.57 L1409.60,894.87 L1410.60,895.17 L1411.60,895.48 L1412.60,895.78 L1413.60,896.08 L1414.60,896.38 L1415.60,896.68 L1416.60,896.98 L1417.60,897.28 L1418.60,897.58 L1419.60,897.88 L1420.60,898.18 L1421.60,898.48 L1422.60,898.78 L1423.60,899.08 L1424.60,899.38 L1425.60,899.68 L1426.60,899.98 L1427.60,900.28 L1428.60,900.57 L1429.60,900.87 L1430.60,901.17 L1431.60,901.47 L1432.60,901.77 L1433.60,902.06 L1434.60,902.36 L1435.60,902.66 L1436.60,902.95 L1437.60,903.25 L1438.60,903.55 L1439.60,903.84 L1440.60,904.14 L1441.60,904.43 L1442.60,904.73 L1443.60,905.03 L1444.60,905.32 L1445.60,905.62 L1446.60,905.91 L1447.60,906.21 L1448.60,906.50 L1449.60,906.80 L1450.60,907.09 L1451.60,907.39 L1452.60,907.68 L1453.60,907.98 L1454.60,908.27 L1455.60,908.57 L1456.60,908.86 L1457.60,909.15 L1458.60,909.45 L1459.60,909.74 L1460.60,910.04 L1461.60,910.33 L1462.60,910.62 L1463.60,910.92 L1464.60,911.21 L1465.60,911.50 L1466.60,911.80 L1467.60,912.09 L1468.60,912.38 L1469.60,912.68 L1470.60,912.97 L1471.60,913.26 L1472.60,913.56 L1473.60,913.85 L1474.60,914.14 L1475.60,914.44 L1476.60,914.73 L1477.60,915.02 L1478.60,915.31 L1479.60,915.61 L1480.60,915.90 L1481.60,916.19 L1482.60,916.49 L1483.60,916.78 L1484.60,917.07 L1485.60,917.36 L1486.60,917.65 L1487.60,917.95 L1488.60,918.24 L1489.60,918.53 L1490.60,918.82 L1491.60,919.12 L1492.60,919.41 L1493.60,919.70 L1494.60,919.99 L1495.60,920.28 L1496.60,920.58 L1497.60,920.87 L1498.60,921.16 L1499.60,921.45 L1500.60,921.74 L1501.60,922.03 L1502.60,922.33 L1503.60,922.62 L1504.60,922.91 L1505.60,923.20 L1506.60,923.49 L1507.60,923.79 L1508.60,924.08 L1509.60,924.37 L1510.60,924.66 L1511.60,924.95 L1512.60,925.24 L1513.60,925.53 L1514.60,925.83 L1515.60,926.12 L1516.60,926.41 L1517.60,926.70 L1518.60,926.99 L1519.60,927.28 L1520.60,927.57 L1521.60,927.87 L1522.60,928.16 L1523.60,928.45 L1524,972.4 L891.1,972.4 Z" fill="#CCFFFF"/>
<line x1="945.9" y1="760.6" x2="945.9" y2="972.4" stroke="#C2C2C2" stroke-width="1.05"/>
<line x1="978.0" y1="760.6" x2="978.0" y2="972.4" stroke="#C2C2C2" stroke-width="1.05"/>
<line x1="1000.8" y1="760.6" x2="1000.8" y2="972.4" stroke="#C2C2C2" stroke-width="1.05"/>
<line x1="1018.5" y1="760.6" x2="1018.5" y2="972.4" stroke="#C2C2C2" stroke-width="1.05"/>
<line x1="1032.9" y1="760.6" x2="1032.9" y2="972.4" stroke="#C2C2C2" stroke-width="1.05"/>
<line x1="1045.1" y1="760.6" x2="1045.1" y2="972.4" stroke="#C2C2C2" stroke-width="1.05"/>
<line x1="1055.6" y1="760.6" x2="1055.6" y2="972.4" stroke="#C2C2C2" stroke-width="1.05"/>
<line x1="1065.0" y1="760.6" x2="1065.0" y2="972.4" stroke="#C2C2C2" stroke-width="1.05"/>
<line x1="1073.3" y1="760.6" x2="1073.3" y2="972.4" stroke="#C2C2C2" stroke-width="1.05"/>
<line x1="1128.1" y1="760.6" x2="1128.1" y2="972.4" stroke="#C2C2C2" stroke-width="1.05"/>
<line x1="1160.2" y1="760.6" x2="1160.2" y2="972.4" stroke="#C2C2C2" stroke-width="1.05"/>
<line x1="1183.0" y1="760.6" x2="1183.0" y2="972.4" stroke="#C2C2C2" stroke-width="1.05"/>
<line x1="1200.7" y1="760.6" x2="1200.7" y2="972.4" stroke="#C2C2C2" stroke-width="1.05"/>
<line x1="1215.1" y1="760.6" x2="1215.1" y2="972.4" stroke="#C2C2C2" stroke-width="1.05"/>
<line x1="1227.3" y1="760.6" x2="1227.3" y2="972.4" stroke="#C2C2C2" stroke-width="1.05"/>
<line x1="1237.8" y1="760.6" x2="1237.8" y2="972.4" stroke="#C2C2C2" stroke-width="1.05"/>
<line x1="1247.2" y1="760.6" x2="1247.2" y2="972.4" stroke="#C2C2C2" stroke-width="1.05"/>
<line x1="1255.5" y1="760.6" x2="1255.5" y2="972.4" stroke="#C2C2C2" stroke-width="1.05"/>
<line x1="1310.3" y1="760.6" x2="1310.3" y2="972.4" stroke="#C2C2C2" stroke-width="1.05"/>
<line x1="1342.4" y1="760.6" x2="1342.4" y2="972.4" stroke="#C2C2C2" stroke-width="1.05"/>
<line x1="1365.2" y1="760.6" x2="1365.2" y2="972.4" stroke="#C2C2C2" stroke-width="1.05"/>
<line x1="1382.9" y1="760.6" x2="1382.9" y2="972.4" stroke="#C2C2C2" stroke-width="1.05"/>
<line x1="1397.3" y1="760.6" x2="1397.3" y2="972.4" stroke="#C2C2C2" stroke-width="1.05"/>
<line x1="1409.5" y1="760.6" x2="1409.5" y2="972.4" stroke="#C2C2C2" stroke-width="1.05"/>
<line x1="1420.0" y1="760.6" x2="1420.0" y2="972.4" stroke="#C2C2C2" stroke-width="1.05"/>
<line x1="1429.4" y1="760.6" x2="1429.4" y2="972.4" stroke="#C2C2C2" stroke-width="1.05"/>
<line x1="1437.7" y1="760.6" x2="1437.7" y2="972.4" stroke="#C2C2C2" stroke-width="1.05"/>
<line x1="1492.5" y1="760.6" x2="1492.5" y2="972.4" stroke="#C2C2C2" stroke-width="1.05"/>
<line x1="891.1" y1="760.6" x2="1520" y2="760.6" stroke="#B6B6B6" stroke-width="1.15"/>
<line x1="891.1" y1="787.1" x2="1520" y2="787.1" stroke="#B6B6B6" stroke-width="1.15"/>
<line x1="891.1" y1="813.5" x2="1520" y2="813.5" stroke="#B6B6B6" stroke-width="1.15"/>
<line x1="891.1" y1="840.0" x2="1520" y2="840.0" stroke="#B6B6B6" stroke-width="1.15"/>
<line x1="891.1" y1="866.5" x2="1520" y2="866.5" stroke="#B6B6B6" stroke-width="1.15"/>
<line x1="891.1" y1="893.0" x2="1520" y2="893.0" stroke="#B6B6B6" stroke-width="1.15"/>
<line x1="891.1" y1="919.5" x2="1520" y2="919.5" stroke="#B6B6B6" stroke-width="1.15"/>
<line x1="891.1" y1="945.9" x2="1520" y2="945.9" stroke="#B6B6B6" stroke-width="1.15"/>
<path d="M891.10,956.46 L892.10,956.17 L893.10,955.88 L894.10,955.59 L895.10,955.30 L896.10,955.00 L897.10,954.71 L898.10,954.42 L899.10,954.13 L900.10,953.84 L901.10,953.55 L902.10,953.26 L903.10,952.97 L904.10,952.68 L905.10,952.39 L906.10,952.10 L907.10,951.81 L908.10,951.52 L909.10,951.23 L910.10,950.94 L911.10,950.64 L912.10,950.35 L913.10,950.06 L914.10,949.77 L915.10,949.48 L916.10,949.19 L917.10,948.90 L918.10,948.61 L919.10,948.32 L920.10,948.03 L921.10,947.74 L922.10,947.45 L923.10,947.16 L924.10,946.86 L925.10,946.57 L926.10,946.28 L927.10,945.99 L928.10,945.70 L929.10,945.41 L930.10,945.12 L931.10,944.83 L932.10,944.54 L933.10,944.25 L934.10,943.96 L935.10,943.67 L936.10,943.38 L937.10,943.08 L938.10,942.79 L939.10,942.50 L940.10,942.21 L941.10,941.92 L942.10,941.63 L943.10,941.34 L944.10,941.05 L945.10,940.76 L946.10,940.47 L947.10,940.18 L948.10,939.89 L949.10,939.59 L950.10,939.30 L951.10,939.01 L952.10,938.72 L953.10,938.43 L954.10,938.14 L955.10,937.85 L956.10,937.56 L957.10,937.27 L958.10,936.98 L959.10,936.69 L960.10,936.39 L961.10,936.10 L962.10,935.81 L963.10,935.52 L964.10,935.23 L965.10,934.94 L966.10,934.65 L967.10,934.36 L968.10,934.07 L969.10,933.78 L970.10,933.48 L971.10,933.19 L972.10,932.90 L973.10,932.61 L974.10,932.32 L975.10,932.03 L976.10,931.74 L977.10,931.45 L978.10,931.16 L979.10,930.87 L980.10,930.57 L981.10,930.28 L982.10,929.99 L983.10,929.70 L984.10,929.41 L985.10,929.12 L986.10,928.83 L987.10,928.54 L988.10,928.24 L989.10,927.95 L990.10,927.66 L991.10,927.37 L992.10,927.08 L993.10,926.79 L994.10,926.50 L995.10,926.20 L996.10,925.91 L997.10,925.62 L998.10,925.33 L999.10,925.04 L1000.10,924.75 L1001.10,924.46 L1002.10,924.16 L1003.10,923.87 L1004.10,923.58 L1005.10,923.29 L1006.10,923.00 L1007.10,922.71 L1008.10,922.41 L1009.10,922.12 L1010.10,921.83 L1011.10,921.54 L1012.10,921.25 L1013.10,920.96 L1014.10,920.66 L1015.10,920.37 L1016.10,920.08 L1017.10,919.79 L1018.10,919.50 L1019.10,919.20 L1020.10,918.91 L1021.10,918.62 L1022.10,918.33 L1023.10,918.03 L1024.10,917.74 L1025.10,917.45 L1026.10,917.16 L1027.10,916.87 L1028.10,916.57 L1029.10,916.28 L1030.10,915.99 L1031.10,915.70 L1032.10,915.40 L1033.10,915.11 L1034.10,914.82 L1035.10,914.52 L1036.10,914.23 L1037.10,913.94 L1038.10,913.65 L1039.10,913.35 L1040.10,913.06 L1041.10,912.77 L1042.10,912.47 L1043.10,912.18 L1044.10,911.89 L1045.10,911.59 L1046.10,911.30 L1047.10,911.01 L1048.10,910.71 L1049.10,910.42 L1050.10,910.12 L1051.10,909.83 L1052.10,909.54 L1053.10,909.24 L1054.10,908.95 L1055.10,908.65 L1056.10,908.36 L1057.10,908.07 L1058.10,907.77 L1059.10,907.48 L1060.10,907.18 L1061.10,906.89 L1062.10,906.59 L1063.10,906.30 L1064.10,906.00 L1065.10,905.71 L1066.10,905.41 L1067.10,905.11 L1068.10,904.82 L1069.10,904.52 L1070.10,904.23 L1071.10,903.93 L1072.10,903.64 L1073.10,903.34 L1074.10,903.04 L1075.10,902.75 L1076.10,902.45 L1077.10,902.15 L1078.10,901.85 L1079.10,901.56 L1080.10,901.26 L1081.10,900.96 L1082.10,900.66 L1083.10,900.37 L1084.10,900.07 L1085.10,899.77 L1086.10,899.47 L1087.10,899.17 L1088.10,898.87 L1089.10,898.57 L1090.10,898.27 L1091.10,897.97 L1092.10,897.67 L1093.10,897.37 L1094.10,897.07 L1095.10,896.77 L1096.10,896.47 L1097.10,896.17 L1098.10,895.87 L1099.10,895.57 L1100.10,895.26 L1101.10,894.96 L1102.10,894.66 L1103.10,894.36 L1104.10,894.05 L1105.10,893.75 L1106.10,893.45 L1107.10,893.14 L1108.10,892.84 L1109.10,892.53 L1110.10,892.23 L1111.10,891.92 L1112.10,891.61 L1113.10,891.31 L1114.10,891.00 L1115.10,890.69 L1116.10,890.38 L1117.10,890.08 L1118.10,889.77 L1119.10,889.46 L1120.10,889.15 L1121.10,888.84 L1122.10,888.53 L1123.10,888.21 L1124.10,887.90 L1125.10,887.59 L1126.10,887.28 L1127.10,886.96 L1128.10,886.65 L1129.10,886.33 L1130.10,886.02 L1131.10,885.70 L1132.10,885.38 L1133.10,885.07 L1134.10,884.75 L1135.10,884.43 L1136.10,884.11 L1137.10,883.79 L1138.10,883.46 L1139.10,883.14 L1140.10,882.82 L1141.10,882.49 L1142.10,882.17 L1143.10,881.84 L1144.10,881.52 L1145.10,881.19 L1146.10,880.86 L1147.10,880.53 L1148.10,880.20 L1149.10,879.86 L1150.10,879.53 L1151.10,879.20 L1152.10,878.86 L1153.10,878.52 L1154.10,878.18 L1155.10,877.84 L1156.10,877.50 L1157.10,877.16 L1158.10,876.82 L1159.10,876.47 L1160.10,876.12 L1161.10,875.78 L1162.10,875.43 L1163.10,875.07 L1164.10,874.72 L1165.10,874.36 L1166.10,874.01 L1167.10,873.65 L1168.10,873.29 L1169.10,872.92 L1170.10,872.56 L1171.10,872.19 L1172.10,871.82 L1173.10,871.45 L1174.10,871.07 L1175.10,870.70 L1176.10,870.32 L1177.10,869.93 L1178.10,869.55 L1179.10,869.16 L1180.10,868.77 L1181.10,868.38 L1182.10,867.98 L1183.10,867.58 L1184.10,867.18 L1185.10,866.77 L1186.10,866.36 L1187.10,865.95 L1188.10,865.53 L1189.10,865.11 L1190.10,864.68 L1191.10,864.25 L1192.10,863.82 L1193.10,863.38 L1194.10,862.93 L1195.10,862.48 L1196.10,862.03 L1197.10,861.57 L1198.10,861.10 L1199.10,860.63 L1200.10,860.15 L1201.10,859.67 L1202.10,859.18 L1203.10,858.68 L1204.10,858.18 L1205.10,857.66 L1206.10,857.14 L1207.10,856.62 L1208.10,856.08 L1209.10,855.53 L1210.10,854.98 L1211.10,854.41 L1212.10,853.83 L1213.10,853.25 L1214.10,852.65 L1215.10,852.04 L1216.10,851.41 L1217.10,850.77 L1218.10,850.12 L1219.10,849.45 L1220.10,848.77 L1221.10,848.07 L1222.10,847.35 L1223.10,846.61 L1224.10,845.85 L1225.10,845.07 L1226.10,844.27 L1227.10,843.44 L1228.10,842.58 L1229.10,841.69 L1230.10,840.77 L1231.10,839.82 L1232.10,838.83 L1233.10,837.80 L1234.10,836.72 L1235.10,835.60 L1236.10,834.42 L1237.10,833.18 L1238.10,831.88 L1239.10,830.50 L1240.10,829.04 L1241.10,827.48 L1242.10,825.81 L1243.10,824.02 L1244.10,822.08 L1244.35,821.57 L1244.60,821.05 L1244.85,820.51 L1245.10,819.97 L1245.35,819.41 L1245.60,818.83 L1245.85,818.25 L1246.10,817.65 L1246.35,817.03 L1246.60,816.39 L1246.85,815.74 L1247.10,815.07 L1247.35,814.38 L1247.60,813.67 L1247.85,812.93 L1248.10,812.17 L1248.35,811.39 L1248.60,810.58 L1248.85,809.74 L1249.10,808.87 L1249.35,807.97 L1249.60,807.03 L1249.85,806.05 L1250.10,805.03 L1250.35,803.96 L1250.60,802.84 L1250.85,801.67 L1251.10,800.43 L1251.35,799.13 L1251.60,797.75 L1251.85,796.29 L1252.10,794.74 L1252.35,793.08 L1252.60,791.30 L1252.85,789.38 L1253.10,787.31 L1253.35,785.05 L1253.60,782.58 L1253.85,779.88 L1254.10,776.91 L1254.35,773.65 L1254.60,770.15 L1254.85,766.53 L1255.10,763.22 L1255.35,761.01 L1255.50,760.60 L1255.60,760.78 L1255.85,762.65 L1256.10,765.82 L1256.35,769.42 L1256.60,772.97 L1256.85,776.28 L1257.10,779.31 L1257.35,782.06 L1257.60,784.57 L1257.85,786.87 L1258.10,788.98 L1258.35,790.93 L1258.60,792.73 L1258.85,794.42 L1259.10,795.99 L1259.35,797.47 L1259.60,798.86 L1259.85,800.18 L1260.10,801.42 L1260.35,802.61 L1260.60,803.74 L1260.85,804.82 L1261.10,805.85 L1261.35,806.83 L1261.60,807.78 L1261.85,808.69 L1262.10,809.57 L1262.35,810.41 L1262.60,811.23 L1262.85,812.02 L1263.10,812.78 L1263.35,813.52 L1263.60,814.24 L1263.85,814.93 L1264.10,815.61 L1264.35,816.26 L1264.60,816.90 L1264.85,817.52 L1265.10,818.13 L1265.35,818.72 L1265.60,819.29 L1265.85,819.86 L1266.10,820.41 L1266.35,820.94 L1266.60,821.47 L1266.85,821.98 L1267.10,822.48 L1267.35,822.97 L1267.60,823.46 L1268.60,825.29 L1269.60,826.99 L1270.60,828.58 L1271.60,830.07 L1272.60,831.47 L1273.60,832.80 L1274.60,834.06 L1275.60,835.25 L1276.60,836.39 L1277.60,837.48 L1278.60,838.53 L1279.60,839.53 L1280.60,840.49 L1281.60,841.42 L1282.60,842.32 L1283.60,843.18 L1284.60,844.02 L1285.60,844.83 L1286.60,845.62 L1287.60,846.39 L1288.60,847.13 L1289.60,847.86 L1290.60,848.56 L1291.60,849.25 L1292.60,849.92 L1293.60,850.58 L1294.60,851.22 L1295.60,851.85 L1296.60,852.46 L1297.60,853.07 L1298.60,853.66 L1299.60,854.24 L1300.60,854.81 L1301.60,855.37 L1302.60,855.91 L1303.60,856.45 L1304.60,856.99 L1305.60,857.51 L1306.60,858.02 L1307.60,858.53 L1308.60,859.03 L1309.60,859.52 L1310.60,860.01 L1311.60,860.49 L1312.60,860.96 L1313.60,861.43 L1314.60,861.89 L1315.60,862.35 L1316.60,862.80 L1317.60,863.24 L1318.60,863.68 L1319.60,864.12 L1320.60,864.55 L1321.60,864.98 L1322.60,865.40 L1323.60,865.82 L1324.60,866.24 L1325.60,866.65 L1326.60,867.06 L1327.60,867.46 L1328.60,867.86 L1329.60,868.26 L1330.60,868.65 L1331.60,869.05 L1332.60,869.43 L1333.60,869.82 L1334.60,870.20 L1335.60,870.58 L1336.60,870.96 L1337.60,871.34 L1338.60,871.71 L1339.60,872.08 L1340.60,872.45 L1341.60,872.81 L1342.60,873.18 L1343.60,873.54 L1344.60,873.90 L1345.60,874.26 L1346.60,874.61 L1347.60,874.97 L1348.60,875.32 L1349.60,875.67 L1350.60,876.02 L1351.60,876.37 L1352.60,876.71 L1353.60,877.06 L1354.60,877.40 L1355.60,877.74 L1356.60,878.08 L1357.60,878.42 L1358.60,878.76 L1359.60,879.10 L1360.60,879.43 L1361.60,879.76 L1362.60,880.10 L1363.60,880.43 L1364.60,880.76 L1365.60,881.09 L1366.60,881.42 L1367.60,881.74 L1368.60,882.07 L1369.60,882.40 L1370.60,882.72 L1371.60,883.04 L1372.60,883.37 L1373.60,883.69 L1374.60,884.01 L1375.60,884.33 L1376.60,884.65 L1377.60,884.97 L1378.60,885.29 L1379.60,885.60 L1380.60,885.92 L1381.60,886.24 L1382.60,886.55 L1383.60,886.87 L1384.60,887.18 L1385.60,887.50 L1386.60,887.81 L1387.60,888.12 L1388.60,888.43 L1389.60,888.74 L1390.60,889.05 L1391.60,889.36 L1392.60,889.67 L1393.60,889.98 L1394.60,890.29 L1395.60,890.60 L1396.60,890.91 L1397.60,891.21 L1398.60,891.52 L1399.60,891.83 L1400.60,892.13 L1401.60,892.44 L1402.60,892.74 L1403.60,893.05 L1404.60,893.35 L1405.60,893.66 L1406.60,893.96 L1407.60,894.27 L1408.60,894.57 L1409.60,894.87 L1410.60,895.17 L1411.60,895.48 L1412.60,895.78 L1413.60,896.08 L1414.60,896.38 L1415.60,896.68 L1416.60,896.98 L1417.60,897.28 L1418.60,897.58 L1419.60,897.88 L1420.60,898.18 L1421.60,898.48 L1422.60,898.78 L1423.60,899.08 L1424.60,899.38 L1425.60,899.68 L1426.60,899.98 L1427.60,900.28 L1428.60,900.57 L1429.60,900.87 L1430.60,901.17 L1431.60,901.47 L1432.60,901.77 L1433.60,902.06 L1434.60,902.36 L1435.60,902.66 L1436.60,902.95 L1437.60,903.25 L1438.60,903.55 L1439.60,903.84 L1440.60,904.14 L1441.60,904.43 L1442.60,904.73 L1443.60,905.03 L1444.60,905.32 L1445.60,905.62 L1446.60,905.91 L1447.60,906.21 L1448.60,906.50 L1449.60,906.80 L1450.60,907.09 L1451.60,907.39 L1452.60,907.68 L1453.60,907.98 L1454.60,908.27 L1455.60,908.57 L1456.60,908.86 L1457.60,909.15 L1458.60,909.45 L1459.60,909.74 L1460.60,910.04 L1461.60,910.33 L1462.60,910.62 L1463.60,910.92 L1464.60,911.21 L1465.60,911.50 L1466.60,911.80 L1467.60,912.09 L1468.60,912.38 L1469.60,912.68 L1470.60,912.97 L1471.60,913.26 L1472.60,913.56 L1473.60,913.85 L1474.60,914.14 L1475.60,914.44 L1476.60,914.73 L1477.60,915.02 L1478.60,915.31 L1479.60,915.61 L1480.60,915.90 L1481.60,916.19 L1482.60,916.49 L1483.60,916.78 L1484.60,917.07 L1485.60,917.36 L1486.60,917.65 L1487.60,917.95 L1488.60,918.24 L1489.60,918.53 L1490.60,918.82 L1491.60,919.12 L1492.60,919.41 L1493.60,919.70 L1494.60,919.99 L1495.60,920.28 L1496.60,920.58 L1497.60,920.87 L1498.60,921.16 L1499.60,921.45 L1500.60,921.74 L1501.60,922.03 L1502.60,922.33 L1503.60,922.62 L1504.60,922.91 L1505.60,923.20 L1506.60,923.49 L1507.60,923.79 L1508.60,924.08 L1509.60,924.37 L1510.60,924.66 L1511.60,924.95 L1512.60,925.24 L1513.60,925.53 L1514.60,925.83 L1515.60,926.12 L1516.60,926.41 L1517.60,926.70 L1518.60,926.99 L1519.60,927.28 L1520.60,927.57 L1521.60,927.87 L1522.60,928.16 L1523.60,928.45" fill="none" stroke="#E01A1A" stroke-width="1.35" stroke-linejoin="round"/>
<line x1="891.1" y1="760.1" x2="891.1" y2="972.9" stroke="#333" stroke-width="1.2"/>
<line x1="890.6" y1="972.4" x2="1520" y2="972.4" stroke="#111" stroke-width="1.5"/>
<line x1="887.6" y1="760.6" x2="891.1" y2="760.6" stroke="#333" stroke-width="1.2"/>
<text x="885.8" y="764.9" font-size="11.2" font-weight="bold" text-anchor="end" fill="#111">0</text>
<line x1="887.6" y1="787.1" x2="891.1" y2="787.1" stroke="#333" stroke-width="1.2"/>
<text x="885.8" y="791.4" font-size="11.2" font-weight="bold" text-anchor="end" fill="#111">-10</text>
<line x1="887.6" y1="813.5" x2="891.1" y2="813.5" stroke="#333" stroke-width="1.2"/>
<text x="885.8" y="817.8" font-size="11.2" font-weight="bold" text-anchor="end" fill="#111">-20</text>
<line x1="887.6" y1="840.0" x2="891.1" y2="840.0" stroke="#333" stroke-width="1.2"/>
<text x="885.8" y="844.3" font-size="11.2" font-weight="bold" text-anchor="end" fill="#111">-30</text>
<line x1="887.6" y1="866.5" x2="891.1" y2="866.5" stroke="#333" stroke-width="1.2"/>
<text x="885.8" y="870.8" font-size="11.2" font-weight="bold" text-anchor="end" fill="#111">-40</text>
<line x1="887.6" y1="893.0" x2="891.1" y2="893.0" stroke="#333" stroke-width="1.2"/>
<text x="885.8" y="897.3" font-size="11.2" font-weight="bold" text-anchor="end" fill="#111">-50</text>
<line x1="887.6" y1="919.5" x2="891.1" y2="919.5" stroke="#333" stroke-width="1.2"/>
<text x="885.8" y="923.8" font-size="11.2" font-weight="bold" text-anchor="end" fill="#111">-60</text>
<line x1="887.6" y1="945.9" x2="891.1" y2="945.9" stroke="#333" stroke-width="1.2"/>
<text x="885.8" y="950.2" font-size="11.2" font-weight="bold" text-anchor="end" fill="#111">-70</text>
<line x1="887.6" y1="972.4" x2="891.1" y2="972.4" stroke="#333" stroke-width="1.2"/>
<text x="885.8" y="976.7" font-size="11.2" font-weight="bold" text-anchor="end" fill="#111">-80</text>
<line x1="1073.3" y1="972.4" x2="1073.3" y2="975.9" stroke="#222" stroke-width="1.2"/>
<line x1="1255.5" y1="972.4" x2="1255.5" y2="975.9" stroke="#222" stroke-width="1.2"/>
<line x1="1437.7" y1="972.4" x2="1437.7" y2="975.9" stroke="#222" stroke-width="1.2"/>
<text x="1257.8" y="990.6" font-size="11.5" font-weight="bold" text-anchor="middle" fill="#111">Frequency</text>
<text transform="translate(857.8,875.6) rotate(-90)" font-size="11.3" font-weight="bold" text-anchor="middle" fill="#111" letter-spacing="1.15">Gain (dB)</text>
</svg>
<div style="left:0;top:0;width:1520px;height:25px;background:#BFD2B9;border-bottom:1px solid #7C9A7A"></div>
<div class="h" style="left:4px;width:218px">A</div>
<div class="h" style="left:222px;width:132px">B</div>
<div class="h b" style="left:353px;width:97px;background:#C1D4BB;border-right:1px solid #111;border-bottom:1px solid #111;border-left:1px solid #4a5a48;box-shadow:none">C</div>
<div class="h" style="left:450px;width:136px">D</div>
<div class="h" style="left:586px;width:96px">E</div>
<div class="h" style="left:682px;width:112px">F</div>
<div class="h" style="left:794px;width:96px">G</div>
<div class="h" style="left:890px;width:96px">H</div>
<div class="h" style="left:986px;width:96px">I</div>
<div class="h" style="left:1082px;width:96px">J</div>
<div class="h" style="left:1178px;width:96px">K</div>
<div class="h" style="left:1274px;width:96px">L</div>
<div class="h" style="left:1370px;width:96px">M</div>
<div class="h" style="left:1466px;width:54px;border-right:0;overflow:hidden"><span style="position:absolute;left:0;width:96px;text-align:center">N</span></div>
<div style="left:3px;top:24px;width:350px;height:1px;background:#4F9466"></div>
<div style="left:450px;top:24px;width:232px;height:1px;background:#4F9466"></div>
<div style="left:0;top:0;width:3px;height:995px;background:#BFD2B9;border-right:1px solid #7F967C"></div>
<div style="left:0;top:24px;width:3px;height:1px;background:#7F967C"></div>
<div style="left:0;top:55px;width:3px;height:1px;background:#7F967C"></div>
<div style="left:0;top:80px;width:3px;height:1px;background:#7F967C"></div>
<div style="left:0;top:105px;width:3px;height:1px;background:#7F967C"></div>
<div style="left:0;top:130px;width:3px;height:1px;background:#7F967C"></div>
<div style="left:0;top:155px;width:3px;height:1px;background:#7F967C"></div>
<div style="left:0;top:181px;width:3px;height:1px;background:#7F967C"></div>
<div style="left:0;top:206px;width:3px;height:1px;background:#7F967C"></div>
<div style="left:0;top:232px;width:3px;height:1px;background:#7F967C"></div>
<div style="left:0;top:257px;width:3px;height:1px;background:#7F967C"></div>
<div style="left:0;top:283px;width:3px;height:1px;background:#7F967C"></div>
<div style="left:0;top:309px;width:3px;height:1px;background:#7F967C"></div>
<div style="left:0;top:334px;width:3px;height:1px;background:#7F967C"></div>
<div style="left:0;top:360px;width:3px;height:1px;background:#7F967C"></div>
<div style="left:0;top:386px;width:3px;height:1px;background:#7F967C"></div>
<div style="left:0;top:412px;width:3px;height:1px;background:#7F967C"></div>
<div style="left:0;top:437px;width:3px;height:1px;background:#7F967C"></div>
<div style="left:0;top:463px;width:3px;height:1px;background:#7F967C"></div>
<div style="left:0;top:488px;width:3px;height:1px;background:#7F967C"></div>
<div style="left:0;top:513px;width:3px;height:1px;background:#7F967C"></div>
<div style="left:0;top:539px;width:3px;height:1px;background:#7F967C"></div>
<div style="left:0;top:564px;width:3px;height:1px;background:#7F967C"></div>
<div style="left:0;top:589px;width:3px;height:1px;background:#7F967C"></div>
<div style="left:0;top:614px;width:3px;height:1px;background:#7F967C"></div>
<div style="left:0;top:639px;width:3px;height:1px;background:#7F967C"></div>
<div style="left:0;top:664px;width:3px;height:1px;background:#7F967C"></div>
<div style="left:0;top:689px;width:3px;height:1px;background:#7F967C"></div>
<div style="left:0;top:714px;width:3px;height:1px;background:#7F967C"></div>
<div style="left:0;top:739px;width:3px;height:1px;background:#7F967C"></div>
<div style="left:0;top:764px;width:3px;height:1px;background:#7F967C"></div>
<div style="left:0;top:789px;width:3px;height:1px;background:#7F967C"></div>
<div style="left:0;top:814px;width:3px;height:1px;background:#7F967C"></div>
<div style="left:0;top:839px;width:3px;height:1px;background:#7F967C"></div>
<div style="left:0;top:864px;width:3px;height:1px;background:#7F967C"></div>
<div style="left:0;top:889px;width:3px;height:1px;background:#7F967C"></div>
<div style="left:0;top:914px;width:3px;height:1px;background:#7F967C"></div>
<div style="left:0;top:939px;width:3px;height:1px;background:#7F967C"></div>
<div style="left:0;top:964px;width:3px;height:1px;background:#7F967C"></div>
<div style="left:0;top:989px;width:3px;height:1px;background:#7F967C"></div>
<div style="left:1px;top:589px;width:2px;height:26px;background:#222"></div>
</body></html>
